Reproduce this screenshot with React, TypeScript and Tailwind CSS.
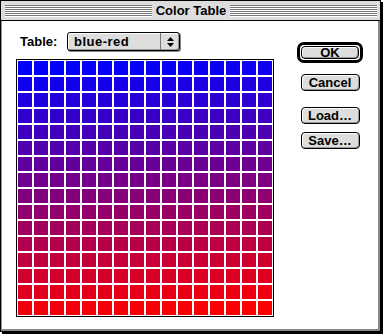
import React from "react";

const cells = Array.from({ length: 256 }, (_, k) => k);

function Stripes() {
  return (
    <div className="flex-1 flex flex-col">
      {[0, 1, 2, 3, 4, 5].map((i) => (
        <div key={i} className="flex flex-col">
          <div className="h-px bg-[#777777]" />
          <div className="h-px bg-white" />
        </div>
      ))}
    </div>
  );
}

function Button({ label, size = "w-[59px] h-[17px]", className = "" }: { label: string; size?: string; className?: string }) {
  return (
    <div
      className={`${size} rounded-[4px] border border-black bg-[#dddddd] shadow-[inset_1px_1px_0_#ffffff,inset_-1px_-1px_0_#999999] flex items-center justify-center text-[13px] font-bold leading-none text-black ${className}`}
    >
      {label}
    </div>
  );
}

export default function App() {
  return (
    <div className="w-[383px] h-[334px] bg-white font-['Liberation_Sans',Arial,sans-serif]">
      <div className="w-[381px] h-[332px] border border-black shadow-[2px_2px_0_#000000] flex flex-col">
        {/* title bar */}
        <div className="h-[20px] shrink-0 bg-[#dddddd] border-b border-black flex items-center pl-[4px] pr-[3px] gap-[4px]">
          <Stripes />
          <span className="text-[13px] font-bold leading-none text-black">Color Table</span>
          <Stripes />
        </div>

        {/* content */}
        <div className="flex-1 flex bg-white border-l border-[#999999] border-r-2 border-r-[#888888] border-b-2 border-b-[#888888]">
          <div className="pl-[14px] pt-[11px] flex flex-col">
            <div className="flex items-center h-[19px]">
              <span className="ml-[4px] w-[47px] text-[13px] font-bold text-black leading-none">Table:</span>
              <div className="w-[113px] h-[19px] rounded-[3px] border border-black bg-[#dddddd] shadow-[inset_1px_1px_0_#ffffff,inset_-1px_-1px_0_#999999,1px_1px_0_#888888] flex items-stretch">
                <span className="flex-1 pl-[6px] flex items-center text-[13px] font-bold tracking-[0.5px] leading-none text-black">
                  blue-red
                </span>
                <div className="w-[19px] border-l border-[#777777] flex items-center justify-center">
                  <svg width="7" height="10" viewBox="0 0 7 10">
                    <path d="M3.5 0 L7 4 L0 4 Z" fill="#000" />
                    <path d="M0 6 L7 6 L3.5 10 Z" fill="#000" />
                  </svg>
                </div>
              </div>
            </div>

            <div className="mt-[8px] w-[258px] h-[258px] border border-black grid grid-cols-16">
              {cells.map((k) => (
                <div
                  key={k}
                  className="m-px w-[14px] h-[14px]"
                  style={{ backgroundColor: `rgb(${k},0,${255 - k})` }}
                />
              ))}
            </div>
          </div>

          <div className="ml-[23px] pt-[21px] w-[66px] flex flex-col items-center">
            <div className="w-[66px] h-[21px] rounded-[7px] border-[3px] border-black flex items-center justify-center">
              <Button label="OK" size="w-[58px] h-[13px]" />
            </div>
            <Button label="Cancel" className="mt-[11px]" />
            <Button label="Load…" className="mt-[16px]" />
            <Button label="Save…" className="mt-[8px]" />
          </div>
        </div>
      </div>
    </div>
  );
}
